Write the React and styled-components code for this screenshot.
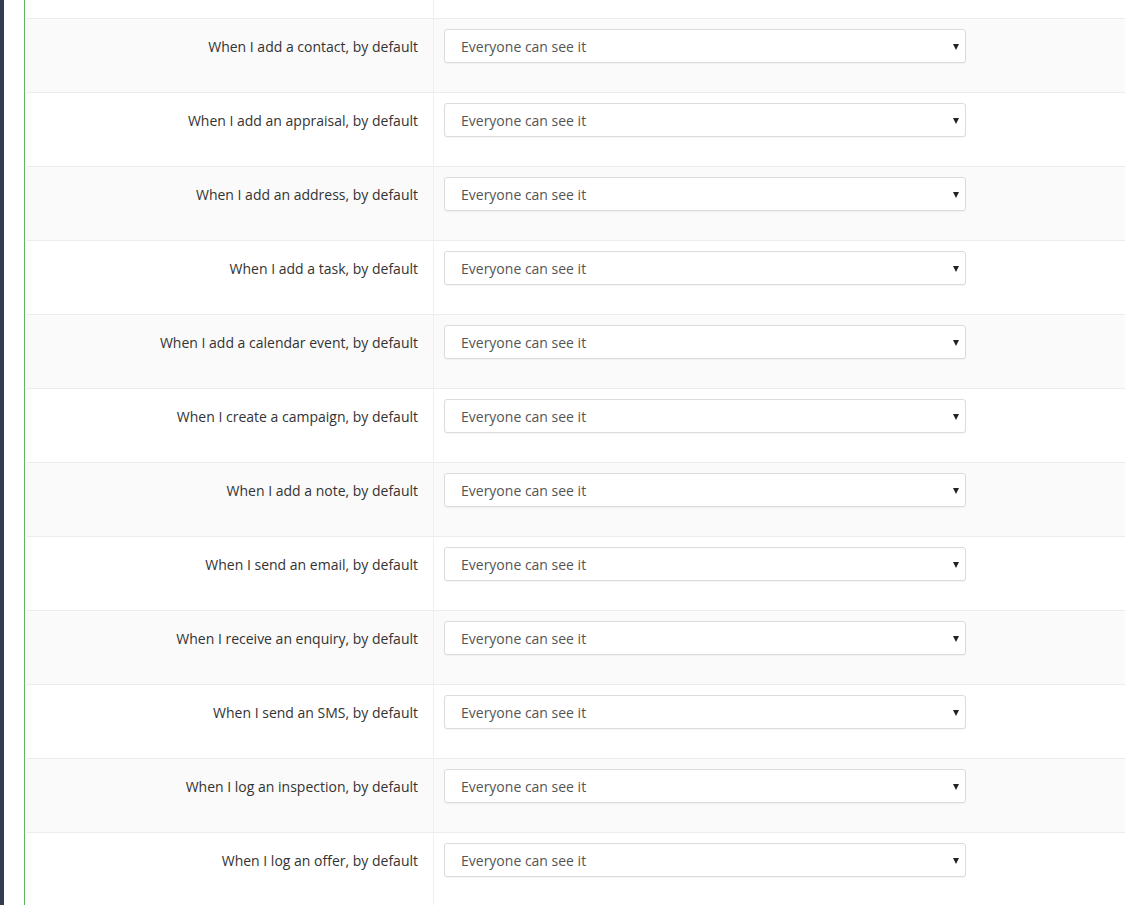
import React from "react";
import styled, { createGlobalStyle } from "styled-components";

const GlobalStyle = createGlobalStyle`
  html, body {
    margin: 0;
    padding: 0;
    background: #fff;
  }
  body {
    font-family: "Open Sans", "Liberation Sans", sans-serif;
    font-size: 14px;
    color: #333;
  }
`;

const rows = [
  "When I add a contact, by default",
  "When I add an appraisal, by default",
  "When I add an address, by default",
  "When I add a task, by default",
  "When I add a calendar event, by default",
  "When I create a campaign, by default",
  "When I add a note, by default",
  "When I send an email, by default",
  "When I receive an enquiry, by default",
  "When I send an SMS, by default",
  "When I log an inspection, by default",
  "When I log an offer, by default",
];

export default function App() {
  return (
    <>
      <GlobalStyle />
      <Page>
        <Sidebar />
        <Gutter />
        <Content>
          <Table>
            <Row $top>
              <Label />
              <Value />
            </Row>
            {rows.map((text, i) => (
              <Row key={text} $striped={i % 2 === 0}>
                <Label>{text}</Label>
                <Value>
                  <SelectWrap>
                    <Select defaultValue="everyone">
                      <option value="everyone">Everyone can see it</option>
                      <option value="team">My team can see it</option>
                      <option value="me">Only I can see it</option>
                    </Select>
                  </SelectWrap>
                </Value>
              </Row>
            ))}
          </Table>
        </Content>
      </Page>
    </>
  );
}

const Page = styled.div`
  display: flex;
  min-height: 905px;
  height: 905px;
  overflow: hidden;
`;

const Sidebar = styled.div`
  width: 4px;
  flex: none;
  background: #2f3d4c;
`;

const Gutter = styled.div`
  width: 20px;
  flex: none;
  background: #fff;
`;

const Content = styled.div`
  flex: 1;
  border-left: 1px solid #5cb85c;
  padding-left: 2px;
`;

const Table = styled.div`
  display: flex;
  flex-direction: column;
`;

const Row = styled.div`
  display: grid;
  grid-template-columns: 407px 1fr;
  height: ${(p) => (p.$top ? "18px" : "73px")};
  border-bottom: 1px solid #ececec;
  background: ${(p) => (p.$striped ? "#fafafa" : "#fff")};
`;

const Label = styled.div`
  display: flex;
  align-items: flex-start;
  justify-content: flex-end;
  padding: 18px 15px 0 0;
  border-right: 1px solid #f0f0f0;
  color: #333;
  line-height: 19px;
  white-space: nowrap;
`;

const Value = styled.div`
  padding: 10px 0 0 10px;
`;

const SelectWrap = styled.div`
  position: relative;
  width: 522px;

  &::after {
    content: "";
    position: absolute;
    right: 7px;
    top: 15px;
    border-left: 3.5px solid transparent;
    border-right: 3.5px solid transparent;
    border-top: 6px solid #222;
    pointer-events: none;
  }
`;

const Select = styled.select`
  appearance: none;
  -webkit-appearance: none;
  display: block;
  width: 100%;
  height: 34px;
  padding: 0 30px 0 16px;
  border: 1px solid #dcdcdc;
  border-radius: 3px;
  background: #fff;
  box-shadow: 0 1px 1px rgba(0, 0, 0, 0.04);
  font-family: "Open Sans", "Liberation Sans", sans-serif;
  font-size: 14px;
  color: #555;
  outline: none;
`;
